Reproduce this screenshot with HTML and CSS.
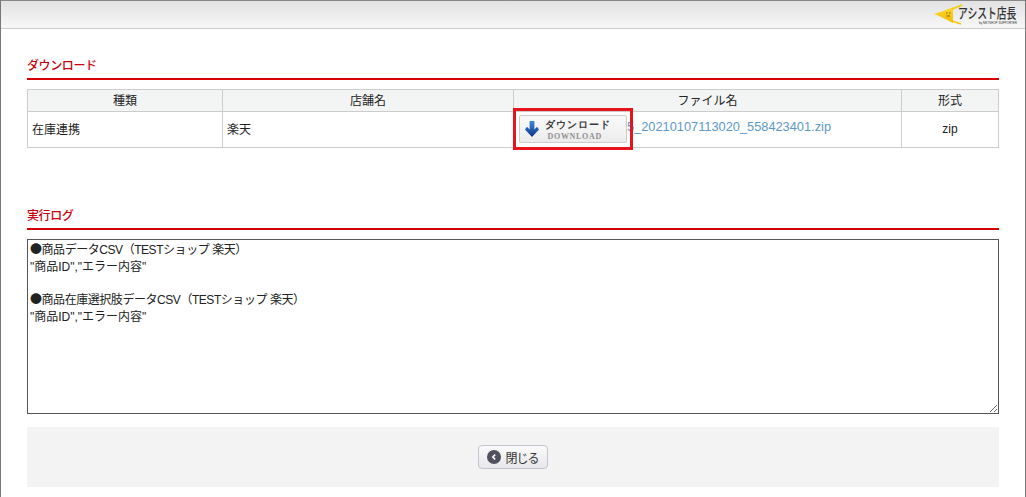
FILE: index.html
```html
<!DOCTYPE html>
<html lang="ja">
<head>
    <meta charset="UTF-8">
    <meta name="viewport" content="width=device-width, initial-scale=1.0">
    <title>ダウンロード</title>
    <link rel="stylesheet" href="styles.css">
</head>
<body>
    <header class="top-bar">
        <div class="logo">
            <svg class="logo-mark" width="30" height="24" viewBox="0 0 30 24">
                <defs>
                    <linearGradient id="coneFill" x1="0" y1="0" x2="0" y2="1">
                        <stop offset="0" stop-color="#ffd92e"/>
                        <stop offset="1" stop-color="#f2b900"/>
                    </linearGradient>
                </defs>
                <path d="M1 13 C7 11 14 9 20 6 L20 22 C14 19 7 15 1 13 Z" fill="url(#coneFill)"/>
                <path d="M19 8 L29 4 M19 20 L28 23" stroke="#f5c800" stroke-width="1.4"/>
                <path d="M13 12 h1.5 M16 12 h1.5 M13.5 15 h3.5" stroke="#7a6400" stroke-width="1"/>
            </svg>
            <div class="logo-text">
                <span class="logo-name">アシスト店長</span>
                <span class="logo-by">by NETSHOP SUPPORTER</span>
            </div>
        </div>
    </header>

    <main>
        <section class="section-download">
            <h2 class="section-title">ダウンロード</h2>
            <table class="file-table">
                <thead>
                    <tr>
                        <th class="col-type">種類</th>
                        <th class="col-shop">店舗名</th>
                        <th class="col-file">ファイル名</th>
                        <th>形式</th>
                    </tr>
                </thead>
                <tbody>
                    <tr>
                        <td>在庫連携</td>
                        <td>楽天</td>
                        <td>
                            <div class="file-cell">
                                <div class="highlight">
                                    <button class="download-btn" type="button">
                                        <svg width="14" height="18" viewBox="0 0 14 18">
                                            <defs>
                                                <linearGradient id="arrowFill" x1="0" y1="0" x2="0" y2="1">
                                                    <stop offset="0" stop-color="#3f8ad8"/>
                                                    <stop offset="1" stop-color="#0b3484"/>
                                                </linearGradient>
                                            </defs>
                                            <path d="M4.6 1 H9.4 V9.4 L12 6.8 L14 9.6 L7 17 L0 9.6 L2 6.8 L4.6 9.4 Z" fill="url(#arrowFill)"/>
                                        </svg>
                                        <span class="download-label">
                                            <span class="download-ja">ダウンロード</span>
                                            <span class="download-en">DOWNLOAD</span>
                                        </span>
                                    </button>
                                </div>
                                <a class="file-link" href="#">5_20210107113020_558423401.zip</a>
                            </div>
                        </td>
                        <td class="center">zip</td>
                    </tr>
                </tbody>
            </table>
        </section>

        <section class="section-log">
            <h2 class="section-title">実行ログ</h2>
            <div class="log-box"><span class="log-head"><span class="log-mark">●</span>商品データCSV（TESTショップ 楽天）</span>
"商品ID","エラー内容"

<span class="log-head"><span class="log-mark">●</span>商品在庫選択肢データCSV（TESTショップ 楽天）</span>
"商品ID","エラー内容"</div>
        </section>

        <div class="footer-bar">
            <button class="close-btn" type="button">
                <svg width="14" height="14" viewBox="0 0 14 14">
                    <circle cx="7" cy="7" r="7" fill="#50505e"/>
                    <path d="M8.2 4.6 L5.8 7 L8.2 9.4" fill="none" stroke="#fff" stroke-width="1.6"/>
                </svg>
                閉じる
            </button>
        </div>
    </main>
</body>
</html>
```

FILE: styles.css
```css
html, body {
    height: 100%;
}

body {
    font-family: "Liberation Sans", "Noto Sans CJK JP", sans-serif;
    font-size: 12px;
    color: #222;
    margin: 0;
    padding: 0;
    background-color: #fff;
    border-left: 1px solid #777;
    border-right: 1px solid #777;
    box-sizing: border-box;
    overflow: hidden;
}

.top-bar {
    height: 29px;
    box-sizing: border-box;
    border-top: 1px solid #888;
    border-bottom: 1px solid #ccc;
    background: linear-gradient(#e2e2e2, #f7f7f7);
    display: flex;
    justify-content: flex-end;
    padding-right: 8px;
}

.logo {
    display: flex;
    align-items: flex-start;
}

.logo-mark {
    margin-right: -5px;
}

.logo-text {
    display: flex;
    flex-direction: column;
    width: 59px;
    padding-top: 4px;
    line-height: 1;
}

.logo-name {
    font-size: 14px;
    line-height: 16px;
    font-weight: 500;
    white-space: nowrap;
    color: #333;
    transform: scaleX(0.7);
    transform-origin: left;
}

.logo-by {
    font-size: 3px;
    line-height: 4px;
    white-space: nowrap;
    color: #333;
    text-align: right;
}

main {
    padding: 27px 26px 0;
}

.section-title {
    margin: 0;
    font-size: 12px;
    line-height: 20px;
    height: 22px;
    font-weight: 500;
    letter-spacing: -0.4px;
    color: #c8000b;
    border-bottom: 2px solid #d40000;
}

.section-download {
    height: 150px;
}

.file-table {
    width: 100%;
    margin-top: 9px;
    border-collapse: collapse;
    table-layout: fixed;
}

.file-table th,
.file-table td {
    border: 1px solid #ccc;
    padding: 0 4px 2px;
}

.file-table th {
    height: 19px;
    background-color: #f3f4f4;
    font-weight: normal;
}

.file-table td {
    height: 33px;
}

.file-table td:nth-child(3) {
    padding: 0 4px;
}

.col-type {
    width: 186px;
}

.col-shop {
    width: 282px;
}

.col-file {
    width: 379px;
}

.center {
    text-align: center;
}

.file-cell {
    display: flex;
    align-items: center;
    height: 35px;
}

.file-link {
    margin: 0 0 7px -6px;
    font-size: 12.8px;
    color: #5b98c9;
    text-decoration: none;
    white-space: nowrap;
}

/* red marker box drawn over the start of the file name */
.highlight {
    position: relative;
    z-index: 1;
    flex: none;
    box-sizing: border-box;
    width: 120px;
    height: 42px;
    margin: -4px 0 -3px -5px;
    border: 3px solid #e8141c;
    display: flex;
    align-items: center;
    justify-content: center;
}

.download-btn {
    flex: none;
    width: 108px;
    height: 28px;
    margin-right: 1px;
    display: flex;
    align-items: center;
    gap: 6px;
    padding: 0 0 0 5px;
    background: linear-gradient(#fafafa, #ececec);
    border: 1px solid #ccc;
    border-radius: 2px;
}

.download-label {
    display: flex;
    flex-direction: column;
    align-items: flex-start;
    padding-top: 2px;
    line-height: 1;
}

.download-ja {
    font-size: 10px;
    font-weight: bold;
    color: #3a3a3a;
    letter-spacing: 1px;
}

.download-en {
    font-family: "Liberation Serif", serif;
    font-size: 8px;
    font-weight: bold;
    color: #8f8f8f;
    letter-spacing: 0.7px;
    margin: 3px 0 0 3px;
}

.log-box {
    width: 100%;
    height: 175px;
    margin-top: 9px;
    box-sizing: border-box;
    padding: 2px;
    border: 1px solid #555;
    font-size: 12px;
    line-height: 16.7px;
    white-space: pre-wrap;
    overflow: auto;
    resize: both;
    color: #222;
}

.log-head {
    letter-spacing: -0.45px;
}

.log-mark {
    font-family: "Noto Sans CJK JP", sans-serif;
    line-height: 0;
}

.footer-bar {
    margin-top: 13px;
    height: 60px;
    background-color: #f3f3f3;
    display: flex;
    align-items: center;
    justify-content: center;
}

.close-btn {
    width: 70px;
    height: 24px;
    display: flex;
    align-items: center;
    justify-content: center;
    gap: 4px;
    padding: 0;
    font-family: inherit;
    font-size: 12px;
    letter-spacing: -1px;
    color: #333;
    background: linear-gradient(#fafafa, #e8e8ec);
    border: 1px solid #c4c4d0;
    border-radius: 4px;
}
```
